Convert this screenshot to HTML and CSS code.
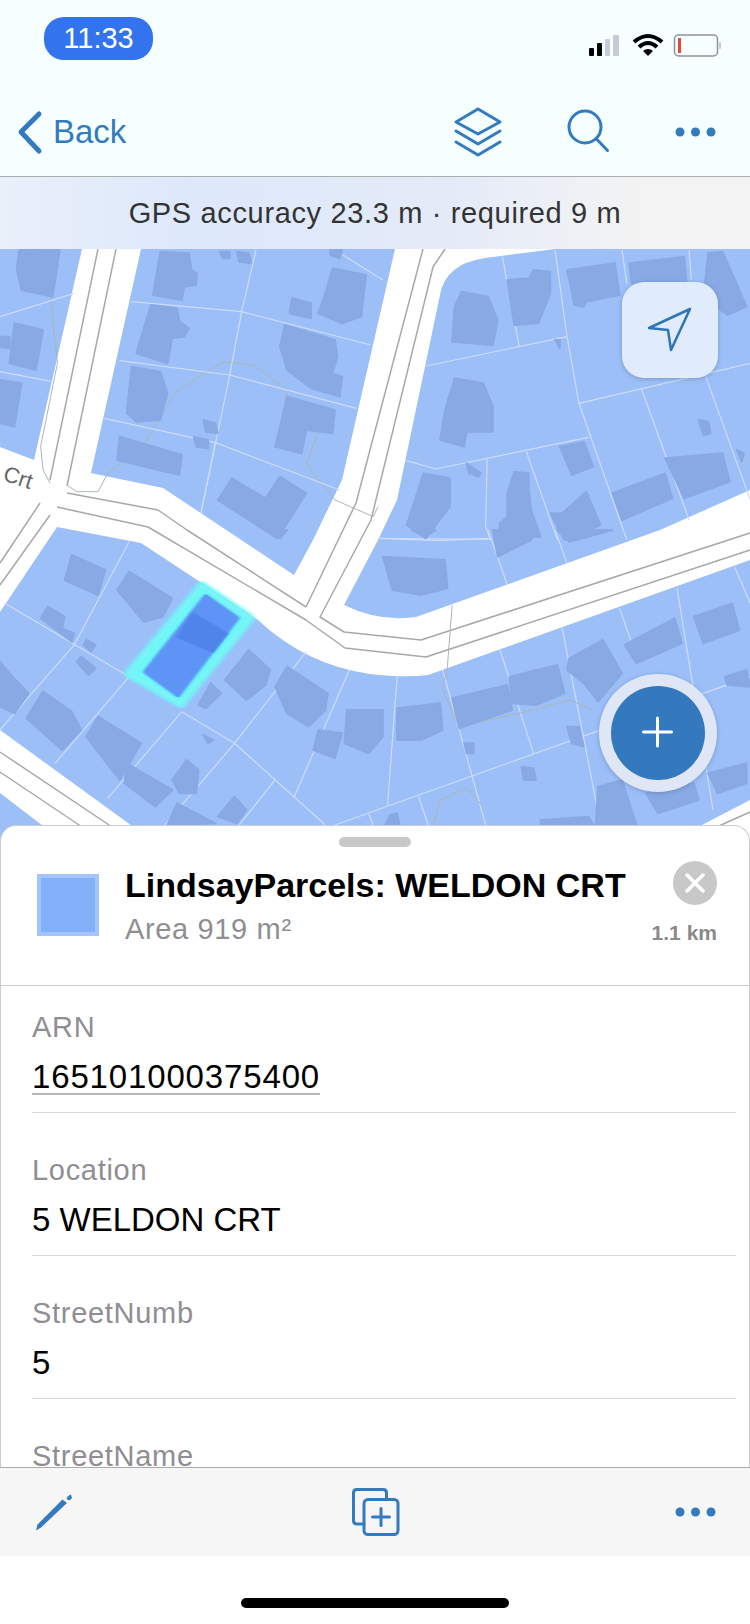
FILE: index.html
```html
<!DOCTYPE html>
<html>
<head>
    <meta charset="utf-8">
    <title>LindsayParcels</title>
    <link rel="stylesheet" href="styles.css">
</head>
<body>
<div class="phone">
    <div class="top">
        <div class="status">
            <span class="time">11:33</span>
            <svg class="status-icons" viewBox="585 30 140 30" width="140" height="30">
                <rect class="fill-black" x="589" y="48" width="5" height="8" rx="1"/>
                <rect class="fill-black" x="597" y="43" width="5" height="13" rx="1"/>
                <rect class="fill-mute" x="605" y="39" width="5" height="17" rx="1"/>
                <rect class="fill-mute" x="613" y="35" width="6" height="21" rx="1"/>
                <path class="wifi" d="M634 42 Q648 30 662 42"/>
                <path class="wifi" d="M639 47 Q648 39 657 47"/>
                <path class="fill-black" d="M643 51 Q648 47 653 51 L648 56 Z"/>
                <rect class="batt" x="674.500" y="35" width="43" height="21" rx="4"/>
                <rect class="fill-red" x="678" y="38" width="3" height="15"/>
                <rect class="fill-mute" x="719" y="42" width="2" height="7" rx="1"/>
            </svg>
        </div>
        <div class="nav">
            <div class="back">
                <svg viewBox="14 108 30 48" width="30" height="48"><polyline class="ico-thick" points="39,114 21,132 39,151"/></svg>
                <span>Back</span>
            </div>
            <div class="nav-actions">
                <svg viewBox="452 106 50 52" width="50" height="52">
                    <polygon class="ico" points="477,109 499,122 477,134 455,122"/>
                    <polyline class="ico" points="455,131 477,144 499,131"/>
                    <polyline class="ico" points="455,142 477,155 499,142"/>
                </svg>
                <svg viewBox="565 109 46 46" width="46" height="46">
                    <circle class="ico" cx="585" cy="127" r="16"/>
                    <line class="ico" x1="596" y1="138.500" x2="607.500" y2="150.500"/>
                </svg>
                <svg viewBox="673 126 45 10" width="45" height="10">
                    <circle class="dot" cx="680" cy="131" r="4.500"/>
                    <circle class="dot" cx="695.500" cy="131" r="4.500"/>
                    <circle class="dot" cx="711" cy="131" r="4.500"/>
                </svg>
            </div>
        </div>
    </div>

    <div class="banner">GPS accuracy 23.3 m · required 9 m</div>

    <div class="map">
        <svg class="map-art" viewBox="0 249 750 590" width="750" height="590">
            <defs>
                <filter id="soft"><feGaussianBlur stdDeviation="1"/></filter>
                <filter id="line"><feGaussianBlur stdDeviation="0.5"/></filter>
                <filter id="inner" x="-20%" y="-20%" width="140%" height="140%"><feGaussianBlur stdDeviation="3 2"/></filter>
                <filter id="glow" x="-20%" y="-20%" width="140%" height="140%"><feGaussianBlur stdDeviation="5 3.500"/></filter>
            </defs>
            <!-- blocks between the roads -->
            <g class="blocks">
                <polygon points="0,249 82,249 34,460 0,447"/>
                <polygon points="141,249 395,249 342,480 313,540 294,575 163,488 91,473"/>
                <path d="M555 249 L485 258 Q445 264 440 295 L397 500 L378 540 L344 605 Q378 622 416 617 L660 530 L750 490 V249 Z"/>
                <path d="M57 527 L141 543 L258 620 Q306 665 370 674 Q405 678 428 675 L750 560 V800 L675 839 H150 L0 730 V612 Z"/>
                <polygon points="0,793 60,839 0,839"/>
            </g>
            <!-- road centre lines -->
            <g class="road-lines" filter="url(#line)">
                <polyline points="98,249 50,480"/>
                <polyline points="116,249 67,486"/>
                <polyline points="423,249 356,503 306,607"/>
                <polyline points="445,249 433,267 371,520 320,617 344,632 421,640 750,533"/>
                <polyline points="67,493 158,510 187,530 306,607"/>
                <polyline points="57,507 148,527 306,620 345,648 426,657 750,550"/>
                <polyline points="40,503 0,563"/>
                <polyline points="50,515 0,585"/>
                <polyline points="0,752 130,839"/>
                <polyline points="0,772 100,839"/>
                <polyline points="690,839 750,812"/>
            </g>
            <text class="crt" transform="translate(2 480) rotate(18)">Crt</text>

            <g transform="translate(0 250) scale(.4785 .3333)">
                <g class="trails">
                    <polyline points="105,130 120,340 85,590 90,660 105,700"/>
                    <polyline points="140,705 160,725 205,725 225,670 300,585 365,430 465,335 530,345 600,420 595,460"/>
                    <polyline points="665,550 640,640 700,750 780,800 790,770"/>
                </g>
                <g class="parcels">
                    <polyline points="0,200 155,130"/>
                    <polyline points="275,155 505,185 775,285"/>
                    <polyline points="535,0 505,185 480,375 420,790"/>
                    <polyline points="250,332 480,375 745,475"/>
                    <polyline points="0,365 110,395"/>
                    <polyline points="218,505 450,578 710,720"/>
                    <polyline points="450,578 420,790"/>
                    <polyline points="700,0 800,90"/>
                    <polyline points="1050,20 1085,290"/>
                    <polyline points="890,348 1185,260"/>
                    <polyline points="1160,0 1185,260 1210,460 1310,870"/>
                    <polyline points="1210,460 1568,340"/>
                    <polyline points="1300,0 1310,100"/>
                    <polyline points="1440,0 1445,90"/>
                    <polyline points="1340,415 1440,810"/>
                    <polyline points="1475,380 1568,750"/>
                    <polyline points="850,632 910,657 1230,562"/>
                    <polyline points="1018,628 1015,830 1025,870"/>
                    <polyline points="1100,605 1165,870"/>
                    <polyline points="790,865 1025,868"/>
                </g>
                <g class="buildings">
                    <polygon points="40,0 125,0 110,140 45,120 35,60"/>
                    <polygon points="30,220 90,240 75,360 20,340"/>
                    <polygon points="0,390 45,400 30,530 0,520"/>
                    <polygon points="0,260 20,260 20,295 0,290"/>
                    <polygon points="335,5 395,10 400,60 412,70 410,105 385,110 380,150 320,135"/>
                    <polygon points="460,5 480,5 480,25 465,25"/>
                    <polygon points="495,5 520,10 525,40 500,35"/>
                    <polygon points="690,0 715,0 710,25 690,15"/>
                    <polygon points="315,165 370,175 375,215 395,235 385,260 360,265 350,340 285,310"/>
                    <polygon points="275,350 335,365 350,430 335,510 285,515 265,490"/>
                    <polygon points="250,560 380,615 375,675 245,630"/>
                    <polygon points="425,510 450,520 455,550 430,545"/>
                    <polygon points="405,560 435,570 435,595 410,590"/>
                    <polygon points="695,55 765,75 755,200 715,220 665,190 680,130"/>
                    <polygon points="610,145 650,160 650,205 605,190"/>
                    <polygon points="595,225 700,270 705,320 695,370 715,380 710,440 650,415 600,360 585,290"/>
                    <polygon points="600,440 700,480 695,550 640,540 630,610 575,590"/>
                    <polygon points="485,685 555,745 585,680 640,730 580,865 455,750"/>
                    <polygon points="965,125 1020,140 1040,210 1030,285 945,275 950,170"/>
                    <polygon points="1060,90 1105,85 1115,60 1150,65 1150,130 1125,220 1075,225"/>
                    <polygon points="1185,60 1285,40 1295,135 1225,155 1220,170 1200,165 1195,125"/>
                    <polygon points="1315,40 1430,20 1435,100 1320,100"/>
                    <polygon points="1480,10 1510,5 1530,70 1560,170 1520,195 1470,140"/>
                    <polygon points="950,385 1010,400 1030,470 1030,545 975,545 970,590 920,570 930,480"/>
                    <polygon points="885,670 940,685 940,770 890,865 850,825"/>
                    <polygon points="975,640 1005,670 1000,680 980,670"/>
                    <polygon points="1075,665 1105,670 1105,720 1110,780 1130,860 1040,870 1045,820 1060,800 1060,730"/>
                    <polygon points="1150,790 1175,790 1225,725 1255,825 1180,870"/>
                    <polygon points="1170,590 1220,575 1240,650 1195,675"/>
                    <polygon points="1280,730 1390,670 1405,745 1300,810"/>
                    <polygon points="1390,625 1510,610 1525,695 1430,745"/>
                    <polygon points="1460,510 1480,515 1485,550 1470,555"/>
                    <polygon points="1540,600 1555,610 1550,635"/>
                    <polygon points="1160,270 1170,270 1170,295"/>
                </g>
            </g>

            <g transform="translate(0 530) scale(.4785 .3333)">
                <g class="parcels">
                    <polyline points="270,35 155,345 0,600"/>
                    <polyline points="10,220 270,440"/>
                    <polyline points="380,545 490,640 680,885"/>
                    <polyline points="270,440 115,700"/>
                    <polyline points="380,545 225,805"/>
                    <polyline points="640,365 490,640 345,885"/>
                    <polyline points="730,420 615,800"/>
                    <polyline points="830,440 810,825"/>
                    <polyline points="925,420 1015,885"/>
                    <polyline points="1045,360 1115,670"/>
                    <polyline points="1175,295 1255,885"/>
                    <polyline points="1295,235 1335,400"/>
                    <polyline points="1415,175 1490,840"/>
                    <polyline points="1535,110 1568,220"/>
                    <polyline points="700,885 1568,440"/>
                    <polyline points="575,750 500,885"/>
                    <polyline points="875,800 895,885"/>
                    <polyline points="770,850 780,885"/>
                    <polyline points="790,25 920,32 1020,25"/>
                    <polyline points="1020,0 1060,165"/>
                    <polyline points="1160,0 1185,100"/>
                </g>
                <g class="trails">
                    <polyline points="945,225 935,410 925,480 960,590 1100,545 1190,510 1240,540"/>
                    <polyline points="905,885 920,810 975,775 1010,830"/>
                </g>
                <g class="buildings">
                    <polygon points="150,75 220,120 205,195 135,150"/>
                    <polygon points="270,125 360,205 340,260 300,275 245,180"/>
                    <polygon points="100,230 135,260 130,295 155,310 150,335 85,265"/>
                    <polygon points="180,330 200,345 190,365 175,345"/>
                    <polygon points="170,380 200,415 185,435 160,395"/>
                    <polygon points="0,395 20,430 60,490 30,550 0,530"/>
                    <polygon points="90,485 150,545 170,600 130,660 55,565"/>
                    <polygon points="205,560 295,640 250,750 180,620"/>
                    <polygon points="265,700 360,780 325,830 260,760"/>
                    <polygon points="390,690 415,720 410,790 375,790 360,750"/>
                    <polygon points="370,820 450,880 350,885"/>
                    <polygon points="490,800 515,840 495,880 455,860"/>
                    <polygon points="425,615 445,630 435,640"/>
                    <polygon points="520,360 565,420 555,465 515,510 470,450"/>
                    <polygon points="440,460 462,490 430,535 415,525"/>
                    <polygon points="600,410 685,490 680,540 645,590 600,550 575,470"/>
                    <polygon points="725,540 800,540 800,620 770,670 720,640"/>
                    <polygon points="665,600 715,610 700,685 655,660"/>
                    <polygon points="830,535 920,520 925,600 880,630 830,630"/>
                    <polygon points="945,505 1060,465 1070,540 960,595"/>
                    <polygon points="1065,440 1165,405 1180,490 1120,525 1070,520"/>
                    <polygon points="1190,385 1260,330 1300,430 1250,515 1220,460 1185,420"/>
                    <polygon points="1305,345 1410,265 1425,340 1330,400"/>
                    <polygon points="1450,260 1530,220 1545,300 1470,340"/>
                    <polygon points="1515,440 1560,420 1568,470 1520,465"/>
                    <polygon points="970,640 990,640 990,670 975,670"/>
                    <polygon points="1185,590 1210,590 1220,650 1195,640"/>
                    <polygon points="1090,710 1115,715 1120,750 1095,750"/>
                    <polygon points="815,855 830,850 835,885 805,885"/>
                    <polygon points="1130,870 1230,860 1240,885 1130,885"/>
                    <polygon points="1250,770 1300,750 1330,885 1245,885"/>
                    <polygon points="1350,790 1450,760 1460,810 1375,850"/>
                    <polygon points="1480,730 1560,700 1560,760 1500,790"/>
                    <polygon points="800,80 930,90 935,175 880,195 820,180"/>
                    <polygon points="1030,0 1115,0 1110,30 1040,80"/>
                    <polygon points="1165,0 1280,0 1190,35"/>
                    <polygon points="560,0 600,0 585,25"/>
                    <polygon points="860,0 910,0 890,20"/>
                </g>
                <!-- selected parcel -->
                <polygon class="sel-glow" filter="url(#glow)" points="422,168 522,265 378,520 270,430"/>
                <polygon class="sel-edge" points="422,168 522,265 378,520 270,430"/>
                <polygon class="sel-fill" filter="url(#inner)" points="430,200 495,265 372,495 305,425"/>
                <polygon class="sel-house" filter="url(#inner)" points="402,245 478,310 445,370 368,322"/>
            </g>
        </svg>

        <div class="locate">
            <svg viewBox="644 305 50 50" width="50" height="50">
                <polygon class="ico-nav" points="689,309 648,328 667,330 670,350"/>
            </svg>
        </div>
        <div class="fab">
            <div class="fab-inner">
                <svg viewBox="640 716 36 36" width="36" height="36">
                    <line class="plus" x1="643.500" y1="733" x2="671.500" y2="733"/>
                    <line class="plus" x1="657.500" y1="719" x2="657.500" y2="747"/>
                </svg>
            </div>
        </div>
    </div>

    <div class="sheet">
        <div class="handle"></div>
        <div class="head">
            <div class="swatch"></div>
            <div class="info">
                <div class="title">LindsayParcels: WELDON CRT</div>
                <div class="area">Area 919 m²</div>
            </div>
            <div class="side">
                <svg class="close" viewBox="0 0 44 44" width="44" height="44">
                    <circle class="close-bg" cx="22" cy="22" r="22"/>
                    <line class="close-x" x1="14" y1="14" x2="30" y2="30"/>
                    <line class="close-x" x1="30" y1="14" x2="14" y2="30"/>
                </svg>
                <div class="dist">1.1 km</div>
            </div>
        </div>
        <div class="row">
            <div class="label">ARN</div>
            <div class="value link">165101000375400</div>
        </div>
        <div class="row">
            <div class="label">Location</div>
            <div class="value">5 WELDON CRT</div>
        </div>
        <div class="row">
            <div class="label">StreetNumb</div>
            <div class="value">5</div>
        </div>
        <div class="row">
            <div class="label">StreetName</div>
        </div>
    </div>

    <div class="toolbar">
        <svg viewBox="32 1490 44 44" width="44" height="44">
            <polygon class="fill-blue" points="62.500,1499.500 67,1503 41,1527.500 36,1530.500 37.500,1524.500"/>
            <polygon class="fill-blue" points="68,1496 71,1494.500 72,1498 69.500,1500.500 66.500,1499"/>
        </svg>
        <svg viewBox="350 1487 50 50" width="50" height="50">
            <path class="ico" d="M364 1524 H357 Q353.500 1524 353.500 1520.500 V1493 Q353.500 1489.500 357 1489.500 H383 Q386.500 1489.500 386.500 1493 V1499"/>
            <rect class="ico" x="364" y="1499.500" width="34" height="35" rx="4"/>
            <line class="ico" x1="372.500" y1="1517" x2="389.500" y2="1517"/>
            <line class="ico" x1="381" y1="1508.500" x2="381" y2="1525.500"/>
        </svg>
        <svg viewBox="673 1506 45 10" width="45" height="10">
            <circle class="dot" cx="680" cy="1511" r="4.500"/>
            <circle class="dot" cx="695.500" cy="1511" r="4.500"/>
            <circle class="dot" cx="711" cy="1511" r="4.500"/>
        </svg>
    </div>
    <div class="home"><div class="home-bar"></div></div>
</div>
</body>
</html>
```

FILE: styles.css
```css
* {
    box-sizing: border-box;
}
body {
    margin: 0;
    background: #fff;
    font-family: "Liberation Sans", Arial, sans-serif;
    overflow: hidden;
}
svg {
    display: block;
    flex: none;
}
.phone {
    width: 750px;
    height: 1624px;
    display: flex;
    flex-direction: column;
    overflow: hidden;
}

/* top bars */
.top {
    height: 177px;
    background: #f6ffff;
    border-bottom: 1px solid #a8adb0;
}
.status {
    height: 88px;
    display: flex;
    justify-content: space-between;
    padding: 17px 25px 0 44px;
}
.time {
    width: 109px;
    height: 43px;
    line-height: 43px;
    border-radius: 20px;
    background: #3373ee;
    color: #fff;
    font-size: 29px;
    text-align: center;
}
.status-icons {
    margin-top: 13px;
}
.fill-black { fill: #000; }
.fill-mute { fill: #c5cbd8; }
.fill-red { fill: #e8483b; }
.fill-blue { fill: #337abf; }
.wifi {
    fill: none;
    stroke: #000;
    stroke-width: 4;
}
.batt {
    fill: none;
    stroke: #8e9298;
    stroke-width: 1.5;
}
.nav {
    height: 88px;
    display: flex;
    justify-content: space-between;
    align-items: center;
    padding: 0 32px 0 14px;
}
.back {
    display: flex;
    align-items: center;
    color: #337abf;
    font-size: 33px;
    gap: 9px;
}
.nav-actions {
    display: flex;
    align-items: center;
    gap: 62px;
}
.ico, .ico-thick, .ico-nav {
    fill: none;
    stroke: #337abf;
    stroke-width: 3;
    stroke-linecap: round;
    stroke-linejoin: round;
}
.ico-thick {
    stroke-width: 5;
}
.ico-nav {
    stroke: #2f74b8;
    stroke-width: 2.500;
}
.dot {
    fill: #337abf;
}
.banner {
    height: 72px;
    line-height: 72px;
    text-align: center;
    font-size: 29px;
    letter-spacing: .65px;
    color: #333;
    background: linear-gradient(90deg, #eaf0fa 0%, #dde8fb 25%, #e4ebf8 60%, #f3f3f4 85%);
}

/* map */
.map {
    position: relative;
    height: 590px;
    flex: none;
    background: #fff;
}
.map-art {
    width: 750px;
    height: 590px;
}
.blocks { fill: #9cbff8; }
.road-lines {
    fill: none;
    stroke: #a8a8a5;
    stroke-width: 1.500;
    stroke-linejoin: round;
}
.crt {
    font-size: 22px;
    fill: #666;
}
.buildings {
    filter: url(#soft);
}
.buildings polygon {
    fill: #88a9e3;
    stroke: #88a9e3;
    stroke-width: 2;
    stroke-linejoin: round;
    vector-effect: non-scaling-stroke;
}
.parcels polyline {
    fill: none;
    stroke: #cddcf7;
    stroke-width: 1.200;
    vector-effect: non-scaling-stroke;
}
.trails polyline {
    fill: none;
    stroke: #a9b8b4;
    stroke-width: 1;
    vector-effect: non-scaling-stroke;
}
.sel-glow {
    fill: #6ef7f7;
    stroke: #6ef7f7;
    stroke-width: 9;
    stroke-linejoin: round;
    vector-effect: non-scaling-stroke;
}
.sel-edge {
    fill: none;
    stroke: #a5e6f8;
    stroke-width: 1;
    vector-effect: non-scaling-stroke;
}
.sel-fill {
    fill: #5d94f6;
    stroke: #5d94f6;
    stroke-width: 5;
    stroke-linejoin: round;
    vector-effect: non-scaling-stroke;
}
.sel-house { fill: #4f84ea; }
.locate {
    position: absolute;
    top: 33px;
    left: 622px;
    width: 96px;
    height: 96px;
    border-radius: 22px;
    background: #e0ebfc;
    box-shadow: 0 1px 4px rgba(60, 80, 120, .35);
    display: flex;
    align-items: center;
    justify-content: center;
}
.fab {
    position: absolute;
    top: 425px;
    left: 599px;
    width: 118px;
    height: 118px;
    border-radius: 50%;
    background: #dfe7f7;
    box-shadow: 0 1px 4px rgba(60, 80, 120, .35);
    display: flex;
    align-items: center;
    justify-content: center;
}
.fab-inner {
    width: 94px;
    height: 94px;
    border-radius: 50%;
    background: #3478bd;
    display: flex;
    align-items: center;
    justify-content: center;
}
.plus {
    stroke: #fff;
    stroke-width: 3;
    stroke-linecap: round;
}

/* bottom sheet */
.sheet {
    position: relative;
    margin-top: -14px;
    height: 642px;
    flex: none;
    background: #fff;
    border: 1px solid #c9ccd0;
    border-bottom: none;
    border-radius: 16px 16px 0 0;
    padding-top: 11px;
    overflow: hidden;
}
.handle {
    width: 72px;
    height: 10px;
    margin: 0 auto;
    border-radius: 5px;
    background: #c8c8c8;
}
.head {
    height: 125px;
    margin-top: 14px;
    padding: 0 32px 0 36px;
    display: flex;
    border-bottom: 1px solid #c8cdd2;
}
.swatch {
    width: 62px;
    height: 62px;
    margin-top: 13px;
    background: #83b0fa;
    border: 4px solid #a3c5fb;
}
.info {
    margin-left: 26px;
    padding-top: 4px;
}
.title {
    font-size: 34px;
    font-weight: bold;
    line-height: 40px;
    color: #000;
    white-space: nowrap;
}
.area {
    margin-top: 6px;
    font-size: 29px;
    letter-spacing: .65px;
    line-height: 36px;
    color: #8e8e93;
}
.side {
    margin-left: auto;
    display: flex;
    flex-direction: column;
    align-items: flex-end;
}
.close-bg { fill: #c8c8c8; }
.close-x {
    stroke: #fff;
    stroke-width: 3.500;
    stroke-linecap: round;
}
.dist {
    margin-top: 18px;
    font-size: 21px;
    line-height: 20px;
    font-weight: bold;
    color: #8a8a8a;
    white-space: nowrap;
}
.row {
    margin-left: 31px;
    width: 704px;
    padding: 40px 0 15px;
    border-bottom: 1px solid #d4d8da;
}
.row:nth-of-type(3) {
    padding-top: 24px;
}
.label {
    font-size: 29px;
    letter-spacing: .7px;
    line-height: 34px;
    color: #8e8e93;
}
.value {
    margin-top: 13px;
    font-size: 33px;
    line-height: 40px;
    color: #000;
}
.link {
    letter-spacing: .85px;
    text-decoration: underline;
    text-decoration-color: #b5b5b5;
    text-decoration-thickness: 2px;
    text-underline-offset: 5px;
}

/* bottom bar */
.toolbar {
    height: 89px;
    flex: none;
    background: #f6f6f6;
    border-top: 1px solid #aaa;
    display: flex;
    align-items: center;
    justify-content: space-between;
    padding: 0 32px;
}
.home {
    flex: 1;
    padding-top: 42px;
    display: flex;
    justify-content: center;
}
.home-bar {
    width: 268px;
    height: 10px;
    border-radius: 5px;
    background: #000;
}
```
